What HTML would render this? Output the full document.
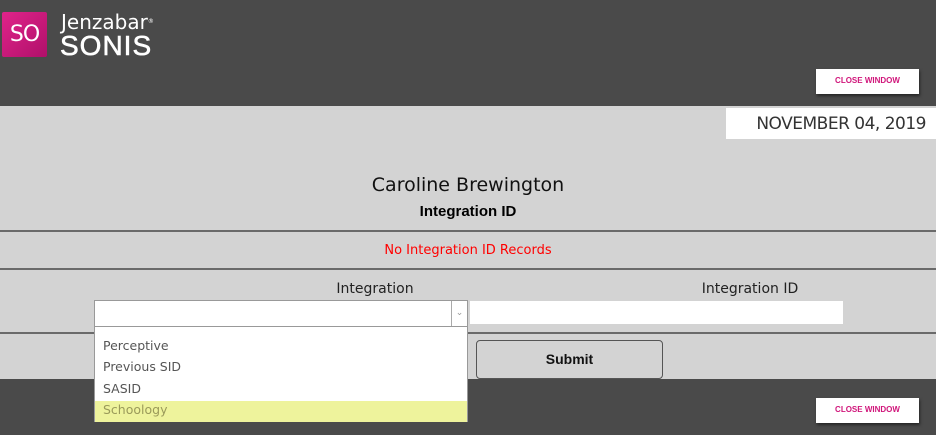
<!DOCTYPE html>
<html><head><style>
*{margin:0;padding:0;box-sizing:border-box}
body{width:936px;height:435px;position:relative;overflow:hidden;background:#d3d3d3;font-family:"Century Gothic","DejaVu Sans","Liberation Sans",sans-serif}
.a{position:absolute}
.dark{background:#4a4a4a;left:0;width:936px}
.line{left:0;width:936px;height:2px;background:#6a6a6a}
.cw{background:#fff;color:#d0157a;font:bold 8px "Liberation Sans",sans-serif;text-align:center;line-height:24px;width:103px;height:25px;left:816px;box-shadow:1px 2px 3px rgba(0,0,0,.5)}
.opt{left:8px;font-size:12.5px;color:#555}
</style></head><body>
<div class="a dark" style="top:0;height:106px"></div>
<div class="a" style="left:2px;top:12px;width:45px;height:45px;background:linear-gradient(135deg,#e0248a,#b0106a);border-radius:2px;color:#fff;font-size:22px;line-height:45px;text-align:center;letter-spacing:-1px">SO</div>
<div class="a" style="left:61px;top:11px;color:#fff;font-size:20px;line-height:22px">Jenzabar<span style="font-size:6px;vertical-align:top">®</span></div>
<div class="a" style="left:60px;top:31px;color:#fff;font:28px/30px 'Liberation Sans',sans-serif;letter-spacing:1px;-webkit-text-stroke:0.6px #fff">SONIS</div>
<div class="a cw" style="top:69px">CLOSE WINDOW</div>
<div class="a" style="left:726px;top:108px;width:210px;height:31px;background:#fff;color:#333;font-size:17px;line-height:33px;text-align:right;padding-right:10px;letter-spacing:-0.5px">NOVEMBER 04, 2019</div>
<div class="a" style="left:0;width:936px;top:174px;text-align:center;font-size:19px;color:#111">Caroline Brewington</div>
<div class="a" style="left:0;width:936px;top:203px;text-align:center;font:bold 15px 'Liberation Sans',sans-serif;color:#000">Integration ID</div>
<div class="a line" style="top:230px"></div>
<div class="a" style="left:0;width:936px;top:243px;text-align:center;font-size:13px;color:#f00">No Integration ID Records</div>
<div class="a line" style="top:268px"></div>
<div class="a" style="left:275px;width:200px;top:281px;text-align:center;font-size:14px;color:#222">Integration</div>
<div class="a" style="left:650px;width:200px;top:281px;text-align:center;font-size:14px;color:#222">Integration ID</div>
<div class="a line" style="top:332px"></div>
<div class="a" style="left:476px;top:340px;width:187px;height:39px;border:1px solid #555;border-radius:4px;text-align:center;font:bold 14px 'Liberation Sans',sans-serif;line-height:36px;color:#111">Submit</div>
<div class="a dark" style="top:379px;height:56px"></div>
<div class="a cw" style="top:398px">CLOSE WINDOW</div>
<div class="a" style="left:94px;top:300px;width:374px;height:27px;background:#fff;border:1px solid #999"><div class="a" style="right:0;top:0;width:16px;height:25px;border-left:1px solid #aaa;color:#999;font-size:9px;text-align:center;line-height:25px">⌄</div></div>
<div class="a" style="left:470px;top:301px;width:373px;height:23px;background:#fff"></div>
<div class="a" style="left:94px;top:326px;width:374px;height:96px;background:#fff;border:1px solid #999">
<div class="a opt" style="top:11px">Perceptive</div>
<div class="a opt" style="top:32px">Previous SID</div>
<div class="a opt" style="top:54px">SASID</div>
<div class="a" style="left:0;top:74px;width:372px;height:21px;background:#eef39c"></div>
<div class="a opt" style="top:75px;color:#9a9a5a">Schoology</div>
</div>
</body></html>
